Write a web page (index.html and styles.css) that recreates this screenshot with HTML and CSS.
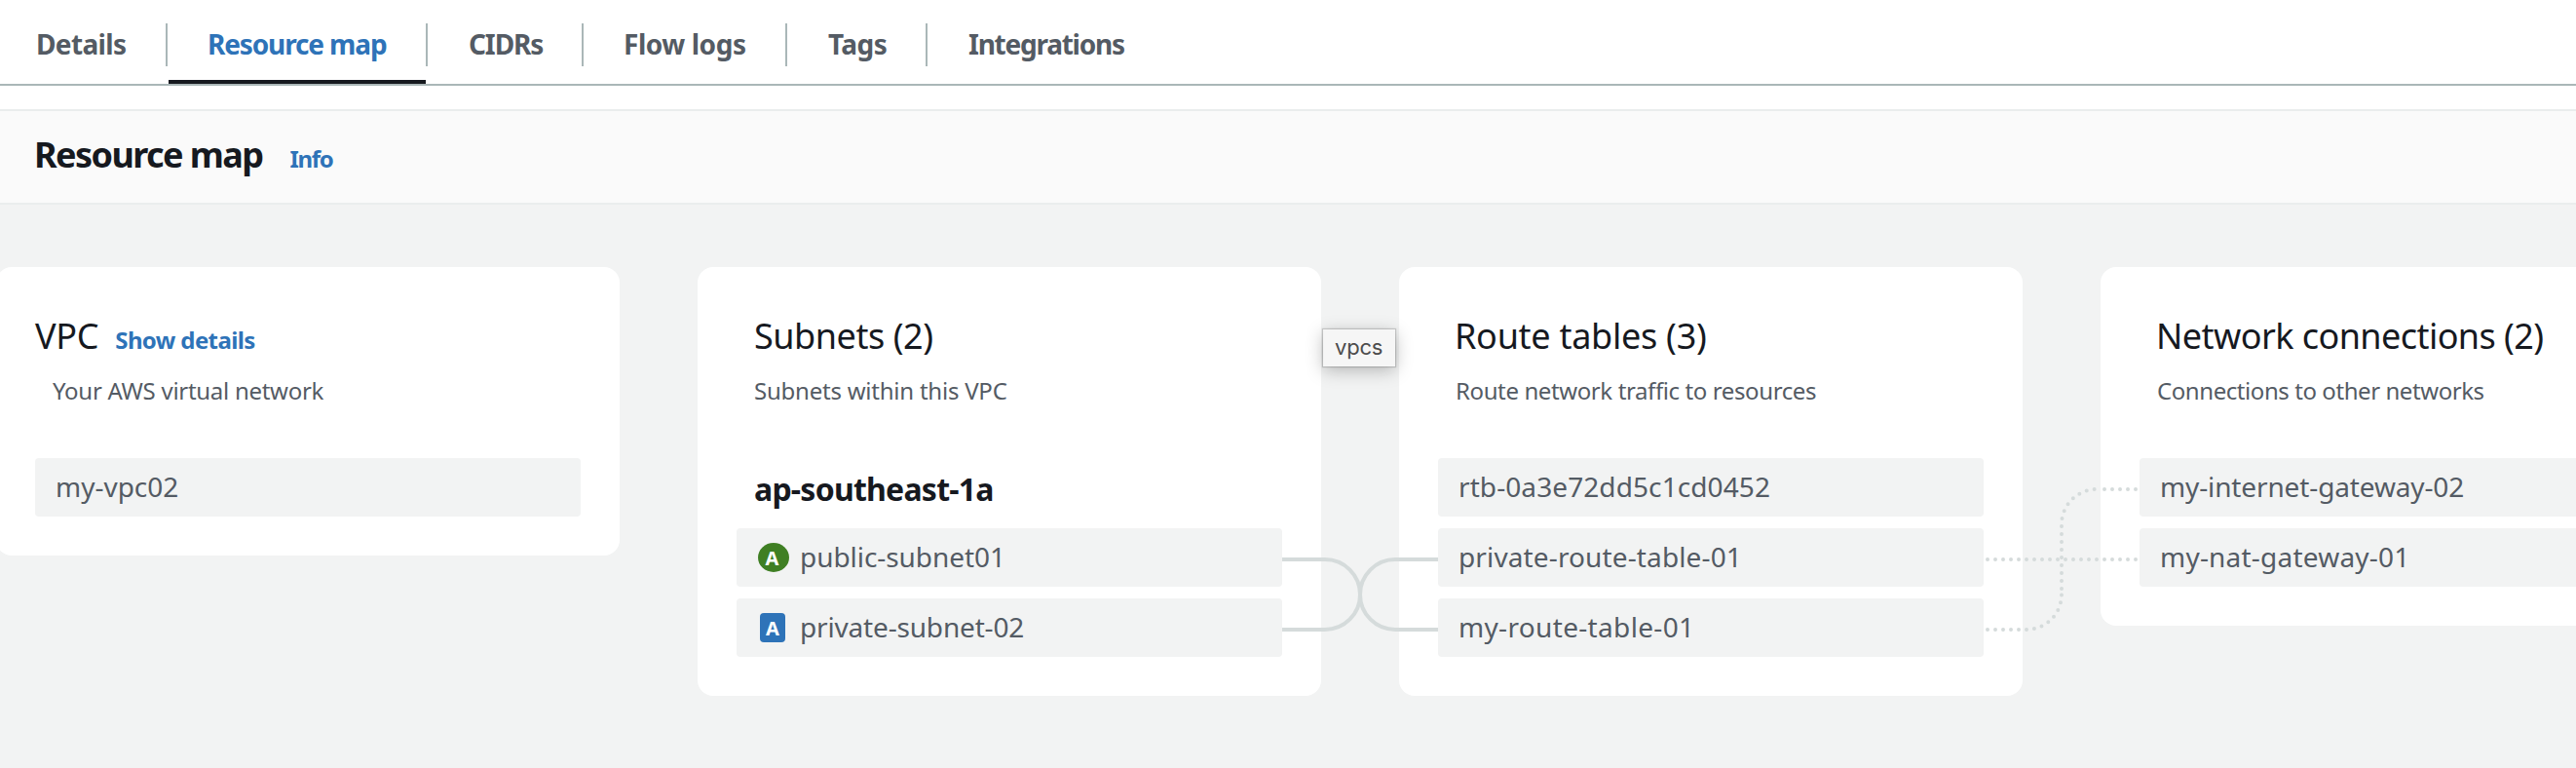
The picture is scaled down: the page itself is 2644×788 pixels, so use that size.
FILE: index.html
```html
<!DOCTYPE html>
<html lang="en">
<head>
<meta charset="utf-8">
<title>Resource map</title>
<link rel="stylesheet" href="styles.css">
</head>
<body>
<nav class="tabs">
  <a class="tab tab-details">Details</a>
  <a class="tab tab-map active">Resource map</a>
  <a class="tab tab-cidrs">CIDRs</a>
  <a class="tab tab-flow">Flow logs</a>
  <a class="tab tab-tags">Tags</a>
  <a class="tab tab-integrations">Integrations</a>
</nav>
<header class="header">
  <h1 class="title">Resource map</h1>
  <a class="info">Info</a>
</header>
<main class="board">
  <section class="card card-vpc">
    <div class="heading"><h2 class="name name-vpc">VPC</h2><a class="details">Show details</a></div>
    <p class="desc desc-vpc">Your AWS virtual network</p>
    <div class="items"><div class="item item-vpc">my-vpc02</div></div>
  </section>
  <section class="card">
    <div class="heading"><h2 class="name name-subnets">Subnets (2)</h2></div>
    <p class="desc desc-subnets">Subnets within this VPC</p>
    <h3 class="zone">ap-southeast-1a</h3>
    <div class="items">
      <div class="item item-public"><span class="badge public">A</span>public-subnet01</div>
      <div class="item item-private"><span class="badge private">A</span>private-subnet-02</div>
    </div>
  </section>
  <section class="card">
    <div class="heading"><h2 class="name name-routes">Route tables (3)</h2></div>
    <p class="desc desc-routes">Route network traffic to resources</p>
    <div class="items">
      <div class="item item-rtb">rtb-0a3e72dd5c1cd0452</div>
      <div class="item item-prt">private-route-table-01</div>
      <div class="item item-mine">my-route-table-01</div>
    </div>
  </section>
  <section class="card card-network">
    <div class="heading"><h2 class="name name-network">Network connections (2)</h2></div>
    <p class="desc desc-network">Connections to other networks</p>
    <div class="items">
      <div class="item item-internet">my-internet-gateway-02</div>
      <div class="item item-nat">my-nat-gateway-01</div>
    </div>
  </section>
  <svg class="links" viewBox="0 210 2644 578" width="2644" height="578">
    <path class="solid" d="M1316 574H1360A36 36 0 0 1 1396 610A36 36 0 0 0 1432 646H1476"/>
    <path class="solid" d="M1316 646H1360A36 36 0 0 0 1396 610A36 36 0 0 1 1432 574H1476"/>
    <path class="dotted" d="M2040 574H2193"/>
    <path class="dotted" d="M2040 646H2080A36 36 0 0 0 2116 610"/>
    <path class="dotted" d="M2116 604V538A36 36 0 0 1 2152 502"/>
    <path class="dotted" d="M2160 502H2193"/>
  </svg>
  <div class="tooltip">vpcs</div>
</main>
</body>
</html>
```

FILE: styles.css
```css
* { box-sizing: border-box; }
body {
  margin: 0;
  width: 2644px;
  height: 788px;
  overflow: hidden;
  background: #fff;
  color: #16191f;
  font-family: "Noto Sans", sans-serif;
  font-weight: 400;
}
h1, h2, h3, p { margin: 0; }

.tabs {
  display: flex;
  height: 88px;
  border-bottom: 2px solid #aab7b8;
}
.tab {
  position: relative;
  height: 86px;
  padding: 24px 0 0 40px;
  margin-right: 3px;
  color: #545b64;
  font-size: 28px;
  font-weight: 700;
  line-height: 43px;
  white-space: nowrap;
}
.tab:not(:last-child)::after {
  content: "";
  position: absolute;
  left: 100%;
  top: 24px;
  width: 2px;
  height: 44px;
  background: #aab7b8;
}
.tab.active { color: #2e73b8; border-bottom: 4px solid #16191f; }
.tab-details { width: 170px; padding-left: 37px; letter-spacing: -.63px; }
.tab-map { width: 264px; letter-spacing: -1.13px; }
.tab-cidrs { width: 157px; padding-left: 41px; letter-spacing: -1.11px; }
.tab-flow { width: 206px; letter-spacing: -.44px; }
.tab-tags { width: 141px; padding-left: 41px; letter-spacing: -.56px; }
.tab-integrations { padding-left: 41px; letter-spacing: -1.24px; }

.header {
  display: flex;
  align-items: baseline;
  gap: 28px;
  height: 98px;
  margin-top: 24px;
  padding-left: 35px;
  border-top: 2px solid #eaeded;
  border-bottom: 2px solid #eaeded;
  background: #fafafa;
}
.title { font-size: 36px; font-weight: 700; line-height: 90px; letter-spacing: -1.57px; }
.info { color: #2e73b8; font-size: 24px; font-weight: 700; letter-spacing: -1.34px; }

.board {
  position: relative;
  display: flex;
  align-items: flex-start;
  gap: 80px;
  height: 578px;
  padding-top: 64px;
  overflow: hidden;
  background: #f2f3f3;
}
.card {
  flex: none;
  width: 640px;
  padding: 46px 40px 40px;
  border-radius: 16px;
  background: #fff;
}
.card-vpc { margin-left: -4px; }
.card-network { width: 488px; padding-right: 0; border-radius: 16px 0 0 16px; }
.heading {
  display: flex;
  align-items: baseline;
  gap: 17px;
  padding-left: 18px;
  height: 48px;
}
.card-vpc .heading { padding-left: 0; }
.name { font-size: 36px; font-weight: 400; line-height: 50px; white-space: nowrap; }
.name-vpc { letter-spacing: -.29px; }
.name-subnets { letter-spacing: -.45px; }
.name-routes { margin-left: -1px; letter-spacing: -.27px; }
.name-network { letter-spacing: -.56px; margin-left: -1px; }
.details { color: #2e73b8; font-size: 24px; font-weight: 700; letter-spacing: -.61px; }
.desc {
  margin: 17px 0 53px;
  padding-left: 18px;
  color: #545b64;
  font-size: 24px;
  line-height: 32px;
}
.desc-vpc { letter-spacing: -.28px; }
.desc-subnets { letter-spacing: -.23px; }
.desc-routes { letter-spacing: -.39px; }
.desc-network { letter-spacing: -.43px; }
.zone {
  height: 72px;
  padding-left: 18px;
  font-size: 32px;
  font-weight: 700;
  line-height: 64px;
  letter-spacing: -.76px;
}
.items { display: grid; gap: 12px; }
.item {
  display: flex;
  align-items: center;
  height: 60px;
  padding: 0 0 2px 21px;
  border-radius: 4px;
  background: #f2f3f3;
  color: #545b64;
  font-size: 28px;
}
.card-network .item { border-radius: 4px 0 0 4px; }
.item-vpc { letter-spacing: -.01px; }
.item-public { letter-spacing: -.06px; }
.item-private { letter-spacing: -.17px; }
.item-rtb { letter-spacing: .09px; }
.item-prt { letter-spacing: .13px; }
.item-mine { letter-spacing: .33px; }
.item-internet { letter-spacing: -.13px; }
.item-nat { letter-spacing: .21px; }
.badge {
  flex: none;
  display: flex;
  align-items: center;
  justify-content: center;
  height: 30px;
  color: #fff;
  font-size: 20px;
  font-weight: 700;
  letter-spacing: 0;
}
.public { width: 32px; margin: 2px 11px 0 1px; padding-right: 3px; border-radius: 50%; background: #3f7f23; }
.private { width: 26px; margin: 2px 15px 0 3px; border-radius: 4px; background: #2e73b8; }

.links { position: absolute; left: 0; top: 0; fill: none; stroke: #d5dbdb; stroke-width: 4; }
.dotted { stroke-linecap: round; stroke-dasharray: 0 8; }

.tooltip {
  position: absolute;
  left: 1358px;
  top: 128px;
  width: 74px;
  height: 38px;
  padding-left: 12px;
  background: #f6f6f6;
  box-shadow: 0 0 1px 1px rgba(0, 0, 0, .16), 0 4px 18px rgba(0, 0, 0, .26);
  color: #4c4c4c;
  font: 400 22px/37px Inter, sans-serif;
  letter-spacing: -.2px;
}
```
